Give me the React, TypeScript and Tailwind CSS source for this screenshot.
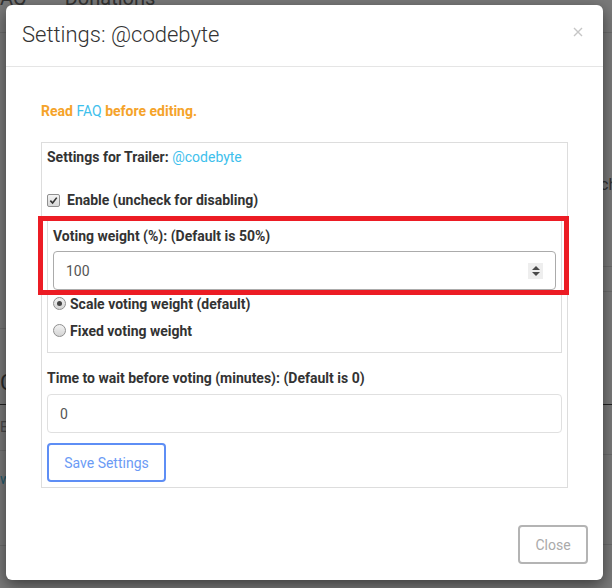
import React from 'react'

function Backdrop() {
  // dimmed page behind the modal, only the edges show
  return (
    <div className="absolute inset-0 flex flex-col text-[#333]">
      <div className="flex h-[33px] shrink-0 items-start gap-[38px] border-b border-[#6c6c6c] pl-0 text-[20px] leading-none">
        <span className="-mt-[12px]">AQ</span>
        <span className="-mt-[12px]">Donations</span>
      </div>
      <div className="flex flex-1 justify-between">
        <div className="flex w-[6px] flex-col overflow-hidden">
          <div className="h-[296px] shrink-0 border-b border-[#6c6c6c]" />
          <div className="flex h-[76px] shrink-0 items-end border-b border-[#222] pb-[10px] text-[22px] leading-none text-[#2a2a2a]">C</div>
          <div className="flex h-[46px] shrink-0 items-center border-b border-[#6c6c6c] text-[14px] text-[#4a4a4a]">E</div>
          <div className="h-[95px] shrink-0 border-b border-[#6c6c6c] pt-[18px] text-[14px] text-[#1e5a6e]">wt</div>
        </div>
        <div className="flex w-[9px] flex-col overflow-hidden">
          <div className="h-[234px] shrink-0 border-b border-[#6c6c6c] pt-[144px] text-[16px] leading-none">
            <span className="-ml-[3px] block">ch</span>
          </div>
          <div className="h-[25px] shrink-0 border-b border-[#6c6c6c]" />
          <div className="h-[113px] shrink-0 border-b border-[#222]" />
          <div className="h-[50px] shrink-0 border-b border-[#6c6c6c]" />
          <div className="h-[90px] shrink-0 border-b border-[#6c6c6c]" />
        </div>
      </div>
    </div>
  )
}

function CheckBox() {
  return (
    <span className="flex h-[13px] w-[13px] shrink-0 items-center justify-center rounded-[2px] border border-[#8f8f8f] bg-gradient-to-b from-[#f4f4f4] to-[#d8d8d8]">
      <svg viewBox="0 0 10 10" className="h-[9px] w-[9px]">
        <path d="M1.5 5.2 L4 7.8 L8.6 1.8" fill="none" stroke="#333" strokeWidth="1.8" />
      </svg>
    </span>
  )
}

function Radio({ checked }: { checked?: boolean }) {
  return (
    <span className="flex h-[13px] w-[13px] shrink-0 items-center justify-center rounded-full border border-[#8f8f8f] bg-gradient-to-b from-[#f2f2f2] to-[#d4d4d4]">
      {checked && <span className="h-[5px] w-[5px] rounded-full bg-[#444]" />}
    </span>
  )
}

function Spinner() {
  return (
    <span className="flex h-[16px] w-[15px] flex-col items-center justify-center gap-[2px] bg-[#eeeeee]">
      <svg viewBox="0 0 8 4" className="h-[4px] w-[8px]">
        <path d="M0 4 L4 0 L8 4 Z" fill="#4a4a4a" />
      </svg>
      <svg viewBox="0 0 8 4" className="h-[4px] w-[8px]">
        <path d="M0 0 L4 4 L8 0 Z" fill="#4a4a4a" />
      </svg>
    </span>
  )
}

export default function App() {
  return (
    <div className="relative h-[588px] w-[612px] overflow-hidden bg-[#7a7a7a] font-['Roboto',sans-serif]">
      <Backdrop />

      <div className="relative z-10 ml-[6px] mt-[5px] flex h-[575px] w-[597px] flex-col rounded-[6px] bg-white shadow-[0_5px_15px_rgba(0,0,0,0.5)]">
        {/* header */}
        <div className="flex h-[62px] shrink-0 items-center justify-between border-b border-[#e5e5e5] pl-[16px] pr-[20px]">
          <h4 className="pb-[1px] text-[22px] font-light leading-none text-[#333]">Settings: @codebyte</h4>
          <svg viewBox="0 0 10 10" className="mb-[8px] h-[10px] w-[10px]">
            <path d="M1 1 L9 9 M9 1 L1 9" stroke="#c6c6c6" strokeWidth="1.4" />
          </svg>
        </div>

        {/* body */}
        <div className="flex flex-1 flex-col px-[35px] pt-[34px] text-[14px] leading-[20px] text-[#333]">
          <p className="font-bold text-[#f5a32a]">
            Read <span className="font-normal text-[#3ec0ec]">FAQ</span> before editing.
          </p>

          <div className="relative mt-[21px] flex flex-col border border-[#dddddd] px-[5px] pb-[5px] pt-[4px]">
            <p>
              <span className="font-bold">Settings for Trailer:</span>{' '}
              <span className="text-[#3ec0ec]">@codebyte</span>
            </p>

            <label className="mt-[23px] flex items-center gap-[7px] font-bold">
              <CheckBox />
              Enable (uncheck for disabling)
            </label>

            <div className="mt-[10px] flex flex-col border border-[#dddddd] px-[5px] pb-[8px] pt-[5px]">
              <p className="font-bold">Voting weight (%): (Default is 50%)</p>
              <div className="mt-[5px] flex h-[39px] items-center justify-between rounded-[4px] border border-[#ababab] pl-[12px] pr-[12px] text-[#555]">
                <span>100</span>
                <Spinner />
              </div>
              <label className="flex h-[27px] items-center gap-[4px] font-bold">
                <Radio checked />
                Scale voting weight (default)
              </label>
              <label className="flex h-[27px] items-center gap-[4px] font-bold">
                <Radio />
                Fixed voting weight
              </label>
            </div>

            <p className="mt-[15px] font-bold">Time to wait before voting (minutes): (Default is 0)</p>
            <div className="mt-[6px] flex h-[39px] items-center rounded-[4px] border border-[#e0e0e0] pl-[12px] text-[#555]">0</div>

            <button className="mt-[10px] h-[39px] w-[119px] rounded-[4px] border-2 border-[#5e8ef5] text-[14px] text-[#6b9bf5]">
              Save Settings
            </button>

            {/* red highlight annotation */}
            <div className="pointer-events-none absolute left-[-4px] top-[73px] h-[79px] w-[531px] border-[5px] border-[#ec1c24]" />
          </div>

          <div className="mt-auto flex justify-end pb-[16px]">
            <button className="-mr-[20px] h-[39px] w-[70px] rounded-[4px] border-2 border-[#b4b4b4] text-[14px] text-[#aaaaaa]">
              Close
            </button>
          </div>
        </div>
      </div>
    </div>
  )
}
